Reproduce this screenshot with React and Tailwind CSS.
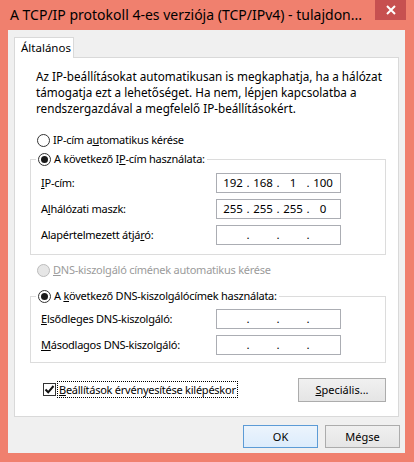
import React from 'react';

const font = 'font-["Segoe_UI","Noto_Sans",sans-serif]';

const Radio = ({ checked, disabled }) => (
    <span
        className={`inline-flex items-center justify-center w-[13px] h-[13px] rounded-full border shrink-0 ${
            disabled ? 'border-[#bcbcbc] bg-[#e6e6e6]' : 'border-[#333333] bg-white'
        }`}
    >
        {checked && <span className="w-[7px] h-[7px] rounded-full bg-[#1a1a1a]" />}
    </span>
);

const IpField = ({ parts = ['', '', '', ''] }) => (
    <div className="flex items-center w-[125px] h-[20px] border border-[#abadb3] bg-white px-[3px] text-[11.5px] leading-none tracking-normal text-black">
        {parts.map((p, i) => (
            <React.Fragment key={i}>
                <span className="w-[26px] text-center">{p}</span>
                {i < 3 && <span className="w-[4px] text-center">.</span>}
            </React.Fragment>
        ))}
    </div>
);

const Row = ({ label, parts, className = '' }) => (
    <div className={`flex items-center h-[20px] ${className}`}>
        <div className="w-[185px] pl-[10px]">{label}</div>
        <IpField parts={parts} />
    </div>
);

export default function App() {
    return (
        <div className={`w-[414px] h-[462px] bg-[#f0806e] flex flex-col ${font} text-black`}>
            {/* title bar */}
            <div className="flex items-start h-[30px] shrink-0">
                <div className="flex-1 pl-[10px] h-[30px] leading-[30px] text-[14px] whitespace-nowrap overflow-hidden">
                    A TCP/IP protokoll 4-es verziója (TCP/IPv4) - tulajdon...
                </div>
                <div className="w-[31px] h-[20px] mr-[8px] bg-[#c75050] flex items-center justify-center">
                    <svg width="10" height="10" viewBox="0 0 10 10">
                        <path d="M1 1 L9 9 M9 1 L1 9" stroke="white" strokeWidth="2" />
                    </svg>
                </div>
            </div>

            {/* client area */}
            <div className="ml-[8px] w-[397px] h-[423px] bg-[#f0f0f0] text-[11px] leading-[16px] tracking-[-0.25px]">
                <div className="ml-[6px] mt-[7px] w-[60px] h-[21px] border-t border-x border-[#d9d9d9] bg-white relative z-10 -mb-px pl-[6px] pt-[2px] text-[11.5px] tracking-normal">
                    Általános
                </div>
                <div className="ml-[6px] w-[385px] h-[360px] border border-[#d9d9d9] bg-white">
                    <p className="pl-[21px] pt-[10px] text-[11.7px] tracking-normal">
                        Az IP-beállításokat automatikusan is megkaphatja, ha a hálózat
                        <br />
                        támogatja ezt a lehetőséget. Ha nem, lépjen kapcsolatba a
                        <br />
                        rendszergazdával a megfelelő IP-beállításokért.
                    </p>

                    <div className="flex items-center gap-[3px] h-[16px] mt-[16px] ml-[22px]">
                        <Radio />
                        <span>IP-cím a<u>u</u>tomatikus kérése</span>
                    </div>

                    {/* static IP group */}
                    <fieldset className="ml-[15px] mt-[3px] w-[356px] border border-[#dcdcdc] pb-[9px]">
                        <legend className="ml-[5px] px-[2px] h-[16px] flex items-center gap-[3px] bg-white">
                            <Radio checked />
                            <span>A következő I<u>P</u>-cím használata:</span>
                        </legend>
                        <Row className="mt-[6px]" label={<><u>I</u>P-cím:</>} parts={['192', '168', '1', '100']} />
                        <Row className="mt-[6px]" label={<>A<u>l</u>hálózati maszk:</>} parts={['255', '255', '255', '0']} />
                        <Row className="mt-[6px]" label={<>Alapértelmezett átjá<u>r</u>ó:</>} />
                    </fieldset>

                    <div className="flex items-center gap-[3px] h-[16px] mt-[7px] ml-[22px] text-[#9b9b9b]">
                        <Radio disabled />
                        <span><u>D</u>NS-kiszolgáló címének automatikus kérése</span>
                    </div>

                    {/* dns group */}
                    <fieldset className="ml-[15px] mt-[10px] w-[356px] border border-[#dcdcdc] pb-[7px]">
                        <legend className="ml-[5px] px-[2px] h-[16px] flex items-center gap-[3px] bg-white">
                            <Radio checked />
                            <span>A <u>k</u>övetkező DNS-kiszolgálócímek használata:</span>
                        </legend>
                        <Row className="mt-[5px]" label={<><u>E</u>lsődleges DNS-kiszolgáló:</>} />
                        <Row className="mt-[6px]" label={<><u>M</u>ásodlagos DNS-kiszolgáló:</>} />
                    </fieldset>

                    <div className="flex items-center h-[23px] mt-[15px] pl-[28px] pr-[12px]">
                        <span className="w-[13px] h-[13px] border border-[#333333] bg-white flex items-center justify-center shrink-0">
                            <svg width="11" height="11" viewBox="0 0 11 11">
                                <path d="M1.5 5.5 L4.2 8.3 L9.5 2" fill="none" stroke="#111" strokeWidth="2" />
                            </svg>
                        </span>
                        <span className="ml-[1px] px-[1px] border border-dotted border-black leading-[15px]">
                            <u>B</u>eállítások érvényesítése kilépéskor
                        </span>
                        <button className="ml-auto w-[88px] h-[24px] border border-[#acacac] bg-gradient-to-b from-[#f0f0f0] to-[#e5e5e5] tracking-normal">
                            <u>S</u>peciális...
                        </button>
                    </div>
                </div>

                <div className="flex justify-end gap-[7px] mt-[8px] mr-[5px] tracking-normal">
                    <button className="w-[75px] h-[23px] border border-[#5c9bd6] bg-gradient-to-b from-[#ecf4fc] to-[#dcecfc]">
                        OK
                    </button>
                    <button className="w-[75px] h-[23px] border border-[#acacac] bg-gradient-to-b from-[#f0f0f0] to-[#e5e5e5]">
                        Mégse
                    </button>
                </div>
            </div>
        </div>
    );
}
